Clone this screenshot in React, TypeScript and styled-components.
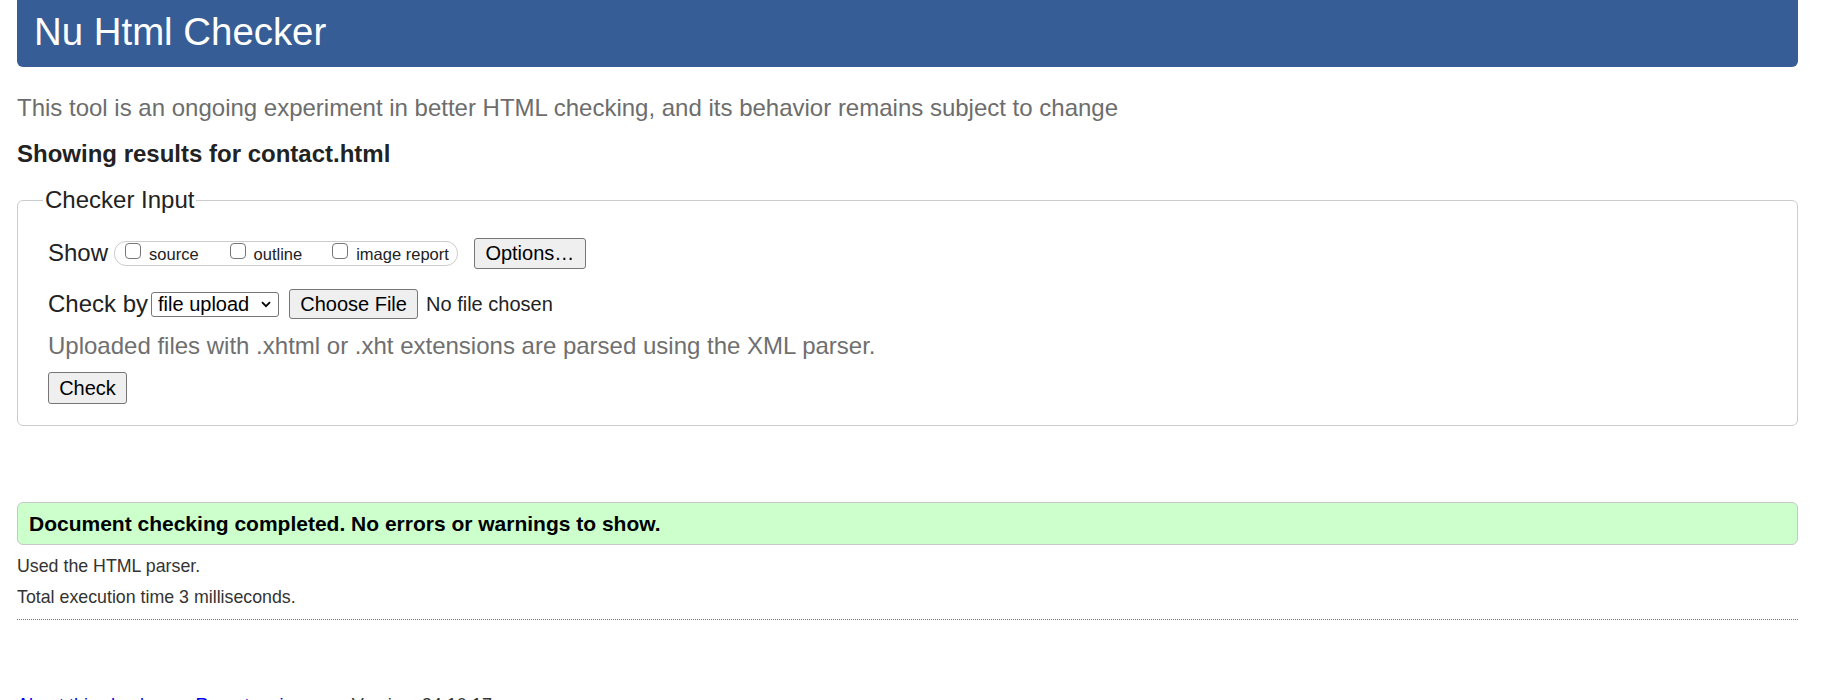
import React from "react";
import styled, { createGlobalStyle } from "styled-components";

const Global = createGlobalStyle`
  html, body { margin: 0; padding: 0; background: #fff; }
  body { font-family: "Liberation Sans", Arial, sans-serif; color: #222; }
  * { box-sizing: border-box; }
`;

const Page = styled.div`
  padding: 0 36px 0 17px;
`;

const Header = styled.header`
  height: 67px;
  background: #365d95;
  border-radius: 0 0 6px 6px;
  padding-left: 17px;
`;

const Title = styled.h1`
  margin: 0;
  font-size: 38.4px;
  font-weight: normal;
  line-height: 64px;
  color: #fff;
`;

const Intro = styled.p`
  margin: 27px 0 0;
  font-size: 24px;
  line-height: 28px;
  color: #6d6d6d;
`;

const Results = styled.p`
  margin: 18px 0 0;
  font-size: 24px;
  line-height: 28px;
  font-weight: bold;
  color: #222;
`;

const Fieldset = styled.fieldset`
  margin: 18px 0 0;
  padding: 21px 30px 21px;
  border: 1px solid #ccc;
  border-radius: 6px;
  min-width: 0;
`;

const Legend = styled.legend`
  font-size: 24px;
  line-height: 28px;
  padding: 0 2px;
  margin-left: -5px;
  color: #222;
`;

const Row = styled.div<{ $mt?: number }>`
  display: flex;
  align-items: center;
  height: 36px;
  margin-top: ${(p) => p.$mt ?? 0}px;
`;

const RowLabel = styled.span<{ $mr: number }>`
  font-size: 24px;
  line-height: 28px;
  color: #222;
  margin-right: ${(p) => p.$mr}px;
`;

const ToggleGroup = styled.div`
  display: flex;
  align-items: center;
  height: 25px;
  border: 1px solid #ccc;
  border-radius: 12px;
  padding: 0 8px 0 10px;
`;

const ToggleItem = styled.label<{ $ml: number }>`
  display: flex;
  align-items: center;
  height: 100%;
  margin-left: ${(p) => p.$ml}px;
`;

const Box = styled.input`
  appearance: none;
  -webkit-appearance: none;
  width: 16px;
  height: 16px;
  margin: 0 8px 0 0;
  align-self: flex-start;
  margin-top: 1px;
  border: 1px solid #767676;
  border-radius: 4px;
  background: #fff;
`;

const ToggleText = styled.span`
  font-size: 16.5px;
  line-height: 20px;
  margin-top: 2px;
  color: #222;
`;

const Button = styled.button<{ $w: number; $h: number; $ml?: number }>`
  width: ${(p) => p.$w}px;
  height: ${(p) => p.$h}px;
  margin-left: ${(p) => p.$ml ?? 0}px;
  padding: 0;
  font-family: "Liberation Sans", Arial, sans-serif;
  font-size: 20px;
  color: #000;
  background: #efefef;
  border: 1px solid #767676;
  border-radius: 3px;
`;

const SelectWrap = styled.div`
  position: relative;
  width: 128px;
  height: 25px;
`;

const Select = styled.select`
  appearance: none;
  -webkit-appearance: none;
  width: 100%;
  height: 100%;
  padding: 0 0 0 6px;
  font-family: "Liberation Sans", Arial, sans-serif;
  font-size: 20px;
  color: #000;
  background: #fff;
  border: 1px solid #767676;
  border-radius: 3px;
`;

const Chevron = styled.svg`
  position: absolute;
  right: 8px;
  top: 9px;
  pointer-events: none;
`;

const FileStatus = styled.span`
  margin-left: 8px;
  font-size: 20px;
  color: #222;
`;

const Hint = styled.p`
  margin: 10px 0 0;
  font-size: 24px;
  line-height: 28px;
  color: #6f6f6f;
`;

const CheckRow = styled.div`
  margin-top: 12px;
  display: flex;
`;

const Success = styled.div`
  margin-top: 76px;
  height: 43px;
  border: 1px solid #c8c8c8;
  border-radius: 6px;
  background: #ccffcc;
  padding-left: 11px;
  font-size: 21px;
  line-height: 41px;
  font-weight: bold;
  color: #000;
`;

const Stat = styled.p<{ $mt: number }>`
  margin: ${(p) => p.$mt}px 0 0;
  font-size: 17.8px;
  line-height: 24px;
  color: #333;
`;

const Rule = styled.hr`
  margin: 10px 0 0;
  border: 0;
  border-top: 1px dotted #777;
  height: 0;
`;

const Footer = styled.p`
  margin: 73px 0 0;
  font-size: 18px;
  line-height: 24px;
  color: #333;
`;

const Link = styled.a`
  color: #0000ee;
  text-decoration: none;
`;

const Sep = styled.span`
  margin: 0 12px;
`;

export default function App() {
  return (
    <>
      <Global />
      <Page>
        <Header>
          <Title>Nu Html Checker</Title>
        </Header>
        <Intro>
          This tool is an ongoing experiment in better HTML checking, and its behavior remains subject to change
        </Intro>
        <Results>Showing results for contact.html</Results>
        <Fieldset>
          <Legend>Checker Input</Legend>
          <Row>
            <RowLabel $mr={6}>Show</RowLabel>
            <ToggleGroup>
              <ToggleItem $ml={0}>
                <Box type="checkbox" />
                <ToggleText>source</ToggleText>
              </ToggleItem>
              <ToggleItem $ml={31}>
                <Box type="checkbox" />
                <ToggleText>outline</ToggleText>
              </ToggleItem>
              <ToggleItem $ml={30}>
                <Box type="checkbox" />
                <ToggleText>image report</ToggleText>
              </ToggleItem>
            </ToggleGroup>
            <Button $w={112} $h={31} $ml={16}>Options…</Button>
          </Row>
          <Row $mt={15}>
            <RowLabel $mr={3}>Check by</RowLabel>
            <SelectWrap>
              <Select defaultValue="file">
                <option value="file">file upload</option>
              </Select>
              <Chevron width="10" height="7" viewBox="0 0 10 7">
                <path d="M1 1.2 L5 5.2 L9 1.2" fill="none" stroke="#000" strokeWidth="1.8" />
              </Chevron>
            </SelectWrap>
            <Button $w={129} $h={30} $ml={10}>Choose File</Button>
            <FileStatus>No file chosen</FileStatus>
          </Row>
          <Hint>Uploaded files with .xhtml or .xht extensions are parsed using the XML parser.</Hint>
          <CheckRow>
            <Button $w={79} $h={32}>Check</Button>
          </CheckRow>
        </Fieldset>
        <Success>Document checking completed. No errors or warnings to show.</Success>
        <Stat $mt={9}>Used the HTML parser.</Stat>
        <Stat $mt={7}>Total execution time 3 milliseconds.</Stat>
        <Rule />
        <Footer>
          <Link href="#">About this checker</Link>
          <Sep>•</Sep>
          <Link href="#">Report an issue</Link>
          <Sep>•</Sep>
          Version: 24.10.17
        </Footer>
      </Page>
    </>
  );
}
